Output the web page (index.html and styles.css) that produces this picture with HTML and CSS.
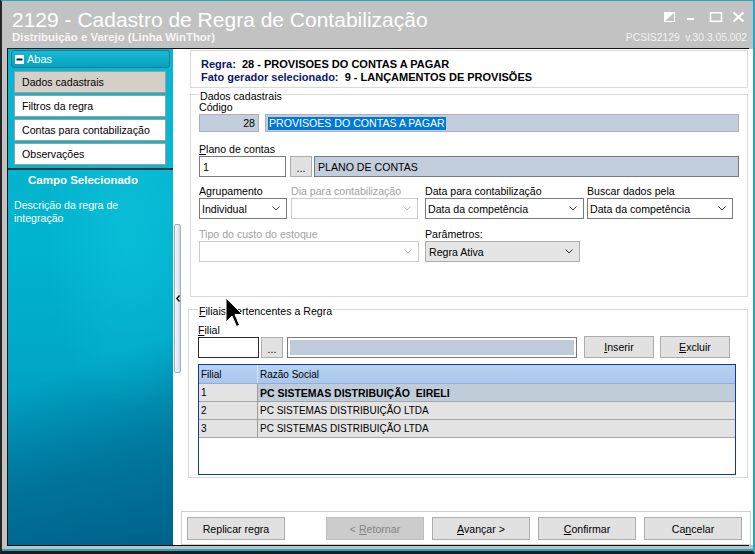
FILE: index.html
```html
<!DOCTYPE html>
<html lang="pt-BR">
<head>
    <meta charset="UTF-8">
    <title>2129 - Cadastro de Regra de Contabilização</title>
    <link rel="stylesheet" href="styles.css">
</head>
<body>

<div class="window">

    <header class="titlebar">
        <div class="title-block">
            <h1 class="title">2129 - Cadastro de Regra de Contabilização</h1>
            <p class="subtitle">Distribuição e Varejo (Linha WinThor)</p>
        </div>
        <div class="title-side">
            <svg class="controls" width="88" height="22" viewBox="0 0 88 22">
                <rect x="5.5" y="3.5" width="10" height="9" fill="none" stroke="#fff"/>
                <polygon points="6,4 15,4 6,12" fill="#fff"/>
                <rect x="28" y="9" width="7" height="2" fill="#fff"/>
                <rect x="51.5" y="3.8" width="11" height="8.5" fill="none" stroke="#fff" stroke-width="1.5"/>
                <path d="M74.5 3.5 L84.5 12.5 M84.5 3.5 L74.5 12.5" stroke="#fff" stroke-width="2"/>
            </svg>
            <p class="version">PCSIS2129&nbsp; v.30.3.05.002</p>
        </div>
    </header>

    <div class="frame">

        <aside class="sidebar">
            <div class="tabs-head">
                <svg class="tabs-toggle" width="9" height="9" viewBox="0 0 9 9">
                    <rect width="9" height="9" fill="#fff"/>
                    <rect x="1.5" y="3.5" width="6" height="2" fill="#0b2530"/>
                </svg>
                Abas
            </div>
            <ul class="tabs">
                <li class="tab active">Dados cadastrais</li>
                <li class="tab">Filtros da regra</li>
                <li class="tab">Contas para contabilização</li>
                <li class="tab">Observações</li>
            </ul>
            <div class="field-info">
                <div class="field-info-head">Campo Selecionado</div>
                <p class="field-info-text">Descrição da regra de<br>integração</p>
            </div>
        </aside>

        <div class="content">
            <div class="splitter">
                <div class="splitter-bar">
                    <svg width="4" height="7" viewBox="0 0 4 7"><polyline points="3.5,0.5 0.8,3.5 3.5,6.5" fill="none" stroke="#000" stroke-width="1.3"/></svg>
                </div>
            </div>

            <main class="main">

                <div class="rule-head">
                    <div><span class="rule-key">Regra:</span>&nbsp; 28 - PROVISOES DO CONTAS A PAGAR</div>
                    <div><span class="rule-key">Fato gerador selecionado:</span>&nbsp; 9 - LANÇAMENTOS DE PROVISÕES</div>
                </div>

                <fieldset class="group group-data">
                    <legend>Dados cadastrais</legend>

                    <div class="label">Código</div>
                    <div class="row row-code">
                        <div class="box box-fill box-code">28</div>
                        <div class="box box-fill box-name"><span class="selected">PROVISOES DO CONTAS A PAGAR</span></div>
                    </div>

                    <div class="label label-gap"><u>P</u>lano de contas</div>
                    <div class="row row-plan">
                        <div class="box box-plan">1</div>
                        <div class="btn btn-dots">...</div>
                        <div class="box box-fill box-desc">PLANO DE CONTAS</div>
                    </div>

                    <div class="fields fields-4">
                        <div class="field">
                            <div class="label">Agrupamento</div>
                            <div class="select w-agrup">Individual
                                <svg width="8" height="5" viewBox="0 0 8 5"><polyline points="0.5,0.5 4,4 7.5,0.5" fill="none" stroke="#333"/></svg>
                            </div>
                        </div>
                        <div class="field">
                            <div class="label disabled">Dia para contabilização</div>
                            <div class="select disabled w-dia">
                                <svg width="8" height="5" viewBox="0 0 8 5"><polyline points="0.5,0.5 4,4 7.5,0.5" fill="none" stroke="#b8b8b8"/></svg>
                            </div>
                        </div>
                        <div class="field">
                            <div class="label">Data para contabilização</div>
                            <div class="select w-data">Data da competência
                                <svg width="8" height="5" viewBox="0 0 8 5"><polyline points="0.5,0.5 4,4 7.5,0.5" fill="none" stroke="#333"/></svg>
                            </div>
                        </div>
                        <div class="field">
                            <div class="label">Buscar dados pela</div>
                            <div class="select">Data da competência
                                <svg width="8" height="5" viewBox="0 0 8 5"><polyline points="0.5,0.5 4,4 7.5,0.5" fill="none" stroke="#333"/></svg>
                            </div>
                        </div>
                    </div>

                    <div class="fields fields-2">
                        <div class="field">
                            <div class="label disabled">Tipo do custo do estoque</div>
                            <div class="select disabled w-tipo">
                                <svg width="8" height="5" viewBox="0 0 8 5"><polyline points="0.5,0.5 4,4 7.5,0.5" fill="none" stroke="#b8b8b8"/></svg>
                            </div>
                        </div>
                        <div class="field">
                            <div class="label">Parâmetros:</div>
                            <div class="select flat">Regra Ativa
                                <svg width="8" height="5" viewBox="0 0 8 5"><polyline points="0.5,0.5 4,4 7.5,0.5" fill="none" stroke="#333"/></svg>
                            </div>
                        </div>
                    </div>
                </fieldset>

                <fieldset class="group group-branches">
                    <legend><u>F</u>iliais Pertencentes a Regra</legend>

                    <div class="label"><u>F</u>ilial</div>
                    <div class="row row-branch">
                        <div class="box box-branch"></div>
                        <div class="btn btn-dots">...</div>
                        <div class="box box-inset"></div>
                        <div class="btn btn-small btn-insert"><span><u>I</u>nserir</span></div>
                        <div class="btn btn-small btn-remove"><span><u>E</u>xcluir</span></div>
                    </div>

                    <div class="grid">
                        <div class="grid-row grid-head">
                            <div class="cell cell-id">Filial</div>
                            <div class="cell cell-name">Razão Social</div>
                        </div>
                        <div class="grid-row current">
                            <div class="cell cell-id">1</div>
                            <div class="cell cell-name">PC SISTEMAS DISTRIBUIÇÃO&nbsp; EIRELI</div>
                        </div>
                        <div class="grid-row">
                            <div class="cell cell-id">2</div>
                            <div class="cell cell-name">PC SISTEMAS DISTRIBUIÇÃO LTDA</div>
                        </div>
                        <div class="grid-row">
                            <div class="cell cell-id">3</div>
                            <div class="cell cell-name">PC SISTEMAS DISTRIBUIÇÃO LTDA</div>
                        </div>
                    </div>
                </fieldset>

                <div class="actions">
                    <div class="btn btn-wide"><span>Replicar regra</span></div>
                    <div class="btn btn-wide off btn-back"><span>&lt; <u>R</u>etornar</span></div>
                    <div class="btn btn-wide"><span><u>A</u>vançar &gt;</span></div>
                    <div class="btn btn-wide"><span><u>C</u>onfirmar</span></div>
                    <div class="btn btn-wide"><span>Ca<u>n</u>celar</span></div>
                </div>

            </main>
        </div>
    </div>

    <svg class="cursor" width="19" height="31" viewBox="0 0 19 31">
        <polygon points="1,1 1,25 7,19 11.5,29.5 14.5,28 10,17.5 17.5,17.5" fill="#000" stroke="#fff" stroke-width="1"/>
    </svg>

</div>

</body>
</html>
```

FILE: styles.css
```css
* {
    box-sizing: border-box;
}

body {
    margin: 0;
    font-family: "Liberation Sans", Arial, sans-serif;
    font-size: 10.6px;
    color: #000;
    background: #c2c2c2;
}

.window {
    position: relative;
    width: 755px;
    height: 554px;
    display: flex;
    flex-direction: column;
    background: #c2c2c2;
    border-top: 1px solid #27a6bb;
    border-left: 2px solid #262626;
    border-right: 2px solid #1ea8c1;
    border-bottom: 3px solid #1c1c1c;
    padding: 0 4px 5px 5px;
    box-shadow: inset 0 -2px 0 #1ea8c1;
}

/* title bar */

.titlebar {
    height: 47px;
    flex: none;
    display: flex;
    justify-content: space-between;
    padding: 8px 2px 0 5px;
    color: #fff;
}

.title {
    margin: 0;
    font-size: 21px;
    font-weight: normal;
    line-height: 22px;
}

.subtitle {
    margin: 0;
    font-size: 11.4px;
    font-weight: bold;
    line-height: 13px;
    color: #f6f6f6;
}

.title-side {
    display: flex;
    flex-direction: column;
    align-items: flex-end;
}

.controls {
    display: block;
}

.version {
    margin: 0;
    font-size: 10.3px;
    line-height: 13px;
    color: #f2f2f2;
}

.frame {
    flex: 1;
    display: flex;
    min-height: 0;
    border: 1px solid #101010;
}

/* left panel */

.sidebar {
    width: 165px;
    flex: none;
    background:
        radial-gradient(ellipse 120px 260px at 120px 180px, rgba(20, 200, 225, .45), rgba(20, 200, 225, 0) 70%),
        linear-gradient(160deg, rgba(0, 0, 0, 0) 62%, rgba(0, 70, 110, .35) 80%, rgba(0, 60, 100, .45) 100%),
        linear-gradient(180deg, #0cb5cf 0%, #00b3ce 40%, #00a6c6 65%, #008fb5 85%, #0082aa 100%);
}

.tabs-head {
    display: flex;
    align-items: center;
    height: 18px;
    margin: 1px 3px 0;
    padding-left: 3px;
    border: 1px solid #0a7f99;
    border-radius: 3px;
    background: linear-gradient(#1cb9d4, #05a2bf);
    color: #fff;
    font-size: 11px;
}

.tabs-toggle {
    margin-right: 3px;
}

.tabs {
    list-style: none;
    margin: 3px 0 0 6px;
    padding: 0;
    width: 152px;
}

.tab {
    display: flex;
    align-items: center;
    height: 22px;
    margin-bottom: 2px;
    padding-left: 7px;
    border: 1px solid #9e9e9e;
    background: #fff;
}

.tab.active {
    background: #d4d0c8;
}

.field-info {
    margin-top: 3px;
    border-top: 2px solid #123845;
}

.field-info-head {
    padding: 3px 0 0 20px;
    font-size: 11.5px;
    font-weight: bold;
    line-height: 14px;
    color: #fff;
}

.field-info-text {
    margin: 12px 0 0;
    padding-left: 6px;
    line-height: 12.5px;
    color: #fff;
}

/* right panel */

.content {
    flex: 1;
    display: flex;
    background: #fff;
}

.splitter {
    width: 8px;
    flex: none;
    padding-top: 175px;
}

.splitter-bar {
    display: flex;
    align-items: center;
    justify-content: center;
    width: 7px;
    height: 149px;
    margin-left: 1px;
    border: 1px solid #a5afb8;
    border-radius: 2px;
    background: linear-gradient(90deg, #f6f8fa, #d3dbe2);
}

.main {
    flex: 1;
    display: flex;
    flex-direction: column;
    padding: 1px 5px 0 9px;
}

.rule-head {
    height: 38px;
    flex: none;
    padding: 7px 0 0 10px;
    border: 1px solid #dadada;
    font-size: 11px;
    font-weight: bold;
    line-height: 13px;
}

.rule-key {
    color: #0b176e;
}

.group {
    min-width: 0;
    margin: 0;
    border: 1px solid #d9d9d9;
}

.group legend {
    height: 8px;
    padding: 0 1px;
    line-height: 13px;
}

.group-data {
    margin-top: 2px;
    padding: 3px 8px 34px;
}

.group-branches {
    margin: 8px 0 0 -2px;
    padding: 11px 11px 2px 9px;
}

.label {
    height: 13px;
    line-height: 13px;
    white-space: nowrap;
}

.label.disabled {
    color: #a2a2a2;
}

.label-gap {
    margin-top: 11px;
}

.row {
    display: flex;
}

.box {
    display: flex;
    align-items: center;
    height: 21px;
    padding: 0 3px;
    border: 1px solid #7a7a7a;
    background: #fff;
    white-space: nowrap;
}

.box-fill {
    background: #c3cedd;
}

.box-code {
    width: 60px;
    height: 18px;
    justify-content: flex-end;
    border-color: #b0b0b0;
}

.box-name {
    flex: 1;
    height: 18px;
    margin-left: 6px;
    padding-left: 2px;
    border-color: #b0b0b0;
}

.selected {
    line-height: 13px;
    padding: 0 1px;
    background: #0078d7;
    color: #fff;
}

.box-plan {
    width: 87px;
}

.row-plan .btn-dots {
    margin: 0 2px 0 4px;
}

.box-desc {
    flex: 1;
}

.fields {
    display: grid;
}

.fields-4 {
    grid-template-columns: 92px 134px 162px 146px;
    margin-top: 8px;
}

.fields-2 {
    grid-template-columns: 226px 155px;
    margin-top: 9px;
}

.select {
    display: flex;
    align-items: center;
    justify-content: space-between;
    height: 21px;
    padding: 0 6px 0 2px;
    border: 1px solid #7a7a7a;
    background: #fff;
    white-space: nowrap;
}

.select.disabled {
    justify-content: flex-end;
    border-color: #cccccc;
}

.select.flat {
    padding-left: 3px;
    border-color: #adadad;
    background: #e5e5e5;
}

.w-agrup {
    width: 88px;
}

.w-dia {
    width: 127px;
}

.w-data {
    width: 159px;
}

.w-tipo {
    width: 220px;
}

.btn {
    display: flex;
    align-items: center;
    justify-content: center;
    border: 1px solid #adadad;
    background: #e1e1e1;
    white-space: nowrap;
}

.btn-dots {
    width: 22px;
    height: 21px;
    padding-top: 3px;
}

.box-branch {
    width: 61px;
    border-color: #2a2a2a;
}

.row-branch .btn-dots {
    margin: 0 4px 0 2px;
}

.box-inset {
    width: 290px;
    padding: 2px;
    background: #c0ccdc content-box;
}

.btn-small {
    width: 70px;
    height: 22px;
    margin-top: -1px;
}

.btn-insert {
    margin-left: 7px;
}

.btn-remove {
    margin-left: 6px;
}

/* grid */

.grid {
    height: 111px;
    margin-top: 6px;
    border: 1px solid #0f3c9b;
    font-size: 10px;
}

.grid-row {
    display: flex;
    height: 18px;
    border-bottom: 1px solid #a6a6a6;
    background: #e3e3e3;
}

.grid-head {
    height: 19px;
    border-bottom: 1px solid #8eaede;
    background: linear-gradient(#b8d2f2, #a9c6ec);
}

.grid-row.current .cell-name {
    background: #c1ccd9;
    font-weight: bold;
    font-size: 10.5px;
}

.cell {
    display: flex;
    align-items: center;
    padding-left: 2px;
    white-space: nowrap;
}

.cell-id {
    width: 58px;
    flex: none;
}

.cell-name {
    flex: 1;
    border-left: 1px solid #9a9a9a;
}

.grid-head .cell-name {
    border-left-color: #d6e4f6;
}

/* bottom buttons */

.actions {
    display: flex;
    height: 34px;
    flex: none;
    margin: auto -3px 0 -9px;
    padding: 5px 0 0 5px;
    border: 1px solid #cfcfcf;
}

.btn-wide {
    width: 98px;
    height: 23px;
    margin-right: 8px;
}

.btn-wide.off {
    border-color: #bfbfbf;
    background: #cccccc;
    color: #838383;
}

.btn-back {
    margin-left: 33px;
}

.cursor {
    position: absolute;
    left: 223px;
    top: 296px;
}
```
